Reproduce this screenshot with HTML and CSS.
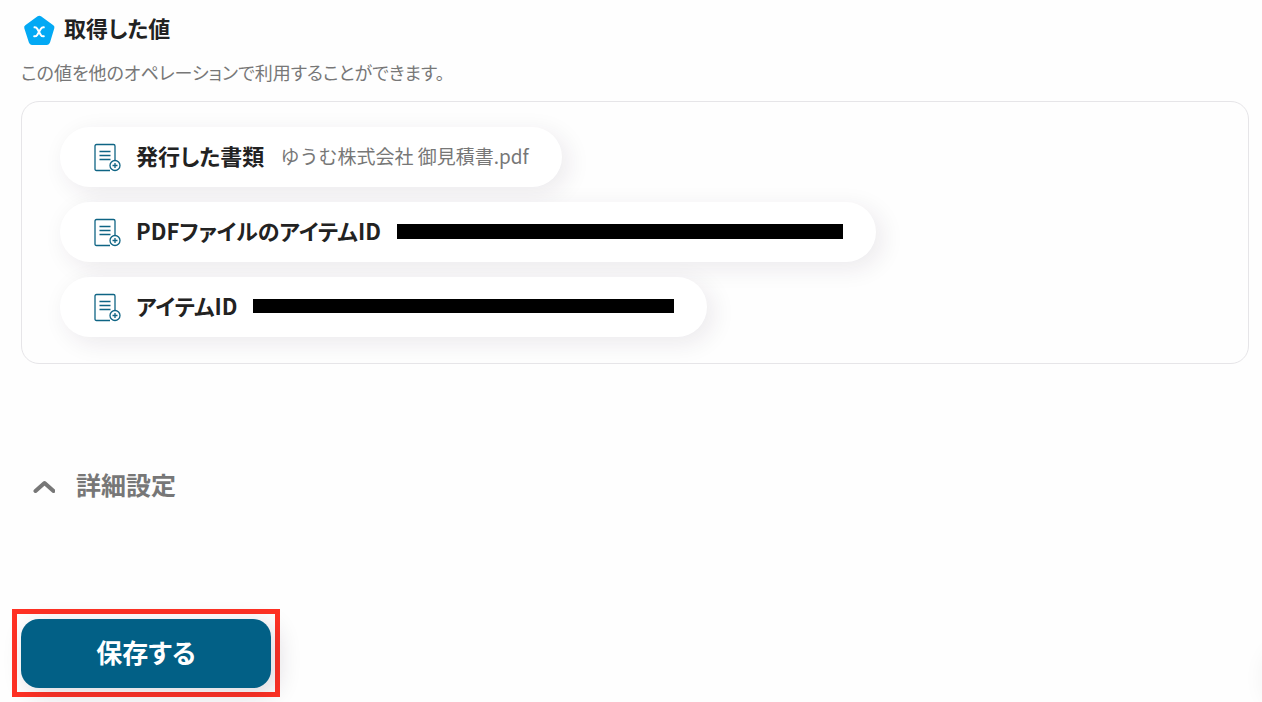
FILE: index.html
```html
<!DOCTYPE html>
<html lang="ja">
<head>
<meta charset="utf-8">
<meta name="viewport" content="width=device-width, initial-scale=1">
<title>取得した値</title>
<link rel="stylesheet" href="styles.css">
</head>
<body>
<svg class="symbols" aria-hidden="true">
  <symbol id="doc-add" viewBox="0 0 28 30">
    <path d="M17 28.500H3.500Q2 28.500 2 27V4Q2 2.500 3.500 2.500H20.500Q22 2.500 22 4V18M6.500 9.500h11M6.500 13.500h11M6.500 17.500h11"/>
    <circle cx="22" cy="23.500" r="5"/>
    <path d="M22 21v5M19.500 23.500h5"/>
  </symbol>
</svg>
<main class="page">
  <section class="values">
    <h1 class="values-title">
      <svg class="badge" viewBox="0 0 32 32" aria-hidden="true">
        <path class="badge-shape" d="M14.600 2.200Q16.300 1.100 18 2.200L30.300 11.200Q31.900 12.400 31.300 14.300L27 28.600Q26.200 31 24 31H8.900Q6.700 31 5.900 28.600L1.300 14.300Q.7 12.400 2.300 11.200Z"/>
        <path class="badge-mark" d="M11.500 13.300Q13.300 13.100 14.200 14.700L17.800 20.900Q18.700 22.500 20.800 22.300M20.800 13.300Q18.900 13.100 17.900 14.700L14.200 20.900Q13.200 22.500 11.200 22.300"/>
      </svg>
      <span class="values-heading">取得した値</span>
    </h1>
    <p class="values-note">この値を他のオペレーションで利用することができます。</p>
    <ul class="panel">
      <li class="pill">
        <svg class="doc" aria-hidden="true"><use href="#doc-add"/></svg>
        <span class="pill-name">発行した書類</span>
        <span class="pill-value">ゆうむ株式会社 御見積書.pdf</span>
      </li>
      <li class="pill">
        <svg class="doc" aria-hidden="true"><use href="#doc-add"/></svg>
        <span class="pill-name">PDFファイルのアイテムID</span>
        <span class="redacted redacted-long"></span>
      </li>
      <li class="pill">
        <svg class="doc" aria-hidden="true"><use href="#doc-add"/></svg>
        <span class="pill-name">アイテムID</span>
        <span class="redacted redacted-short"></span>
      </li>
    </ul>
  </section>
  <button class="details" type="button" aria-expanded="true">
    <svg class="chevron" viewBox="0 0 22 14" aria-hidden="true"><path d="M2.500 12L11.500 4L20.500 12"/></svg>
    <span class="details-label">詳細設定</span>
  </button>
  <div class="highlight">
    <button class="save" type="button">保存する</button>
  </div>
  <div class="edge-shadow"></div>
</main>
</body>
</html>
```
FILE: styles.css
```css
* { box-sizing: border-box; }

body {
  margin: 0;
  background: #fefefe;
  color: #222;
  font-family: "Noto Sans CJK JP", sans-serif;
  font-feature-settings: "palt";
}

.symbols { position: absolute; width: 0; height: 0; }

.page {
  position: relative;
  min-height: 100vh;
  padding: 12px 13px 5px 12px;
  overflow: hidden;
}

.values { padding-left: 9px; }

.values-title {
  display: flex;
  align-items: center;
  gap: 9px;
  height: 36px;
  margin: 0;
  padding-left: 2px;
  font-size: 22px;
  font-weight: 700;
  line-height: 36px;
}

.values-heading { padding-bottom: 6px; }

.badge { width: 32px; height: 32px; }
.badge-shape { fill: #03a9f4; }
.badge-mark { fill: none; stroke: #fff; stroke-width: 2; stroke-linecap: round; }

.values-note {
  margin: 12px 0 17px;
  color: #777;
  font-size: 18px;
  line-height: 24px;
}

.panel {
  display: flex;
  flex-direction: column;
  align-items: flex-start;
  gap: 15px;
  margin: 0;
  padding: 25px 38px 26px;
  border: 1px solid #e6e5e8;
  border-radius: 18px;
  list-style: none;
}

.pill {
  display: flex;
  align-items: center;
  height: 60px;
  padding: 0 33px;
  border-radius: 30px;
  background: #fff;
  box-shadow: 6px 6px 24px rgba(40, 20, 50, 0.09);
}

.doc {
  width: 28px;
  height: 30px;
  margin-right: 15px;
  fill: none;
  stroke: #0e6484;
  stroke-width: 1.3;
}

.pill-name {
  margin-right: 16px;
  padding-bottom: 4px;
  font-size: 22px;
  font-weight: 700;
}

.pill-value {
  padding-bottom: 4px;
  color: #777;
  font-size: 19px;
  font-feature-settings: normal;
}

.redacted { margin-bottom: 2px; background: #000; }
.redacted-long { width: 446px; height: 15px; }
.redacted-short { width: 421px; height: 14px; }

.details {
  display: flex;
  align-items: center;
  gap: 21px;
  margin: 103px 0 0 21px;
  padding: 0;
  border: 0;
  background: none;
  color: #777;
  font: inherit;
  font-size: 25px;
  font-weight: 700;
  line-height: 34px;
}

.details-label { padding-bottom: 4px; }

.chevron { width: 22px; height: 14px; fill: none; stroke: #777; stroke-width: 4; stroke-linecap: round; stroke-linejoin: round; }

.highlight {
  width: fit-content;
  margin-top: 104px;
  padding: 5px 4px 4px;
  border: 5px solid #ff3124;
}

.save {
  display: block;
  width: 250px;
  height: 69px;
  padding: 0 0 4px;
  border: 0;
  border-radius: 18px;
  background: #026086;
  box-shadow: 6px 6px 24px rgba(40, 20, 50, 0.16);
  color: #fff;
  font: inherit;
  font-size: 26px;
  font-weight: 700;
}

.edge-shadow {
  position: absolute;
  right: -72px;
  bottom: -10px;
  width: 68px;
  height: 68px;
  border-radius: 50%;
  box-shadow: 0 0 24px rgba(40, 20, 50, 0.08);
}
```
